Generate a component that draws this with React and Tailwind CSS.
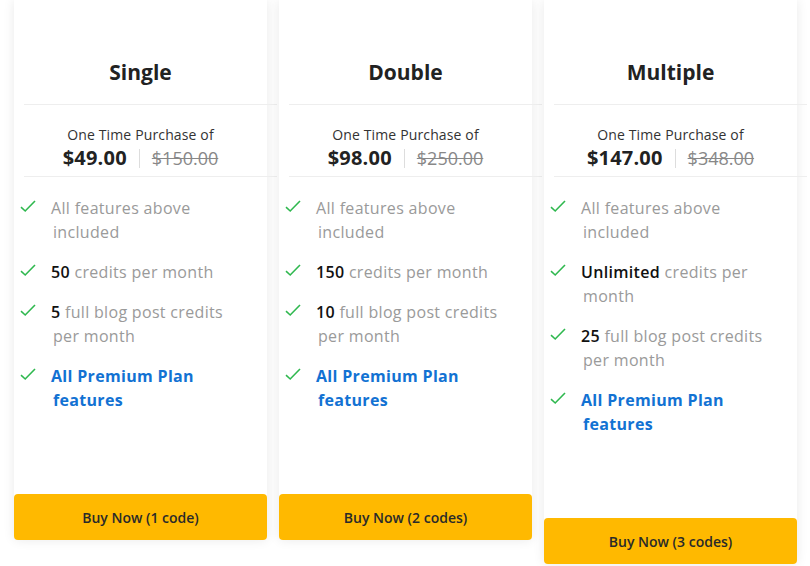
const PLANS = [
  {
    name: 'Single',
    price: '$49.00',
    was: '$150.00',
    credits: '50',
    blog: '5',
    button: 'Buy Now (1 code)',
  },
  {
    name: 'Double',
    price: '$98.00',
    was: '$250.00',
    credits: '150',
    blog: '10',
    button: 'Buy Now (2 codes)',
  },
  {
    name: 'Multiple',
    price: '$147.00',
    was: '$348.00',
    credits: 'Unlimited',
    blog: '25',
    button: 'Buy Now (3 codes)',
  },
];

const Check = () => (
  <svg width="16" height="13" viewBox="0 0 16 13" fill="none" className="shrink-0 mt-[4px]">
    <path d="M1 7.2 L5.2 11 L15 1" stroke="#2fb84f" strokeWidth="1.6" />
  </svg>
);

const Feature = ({ children }) => (
  <li className="flex items-start gap-[15px] pl-[6px]">
    <Check />
    <span className="w-[186px] pl-[2px] -indent-[2px] leading-[24px]">{children}</span>
  </li>
);

const PlanCard = ({ plan }) => (
  <div className="w-[253px] bg-white shadow-[0_0_12px_rgba(0,0,0,0.09)] rounded-b-[4px] flex flex-col">
    <h2 className="pt-[58px] pb-[18px] text-center text-[21px] leading-[28px] font-bold text-[#222]">
      {plan.name}
    </h2>
    <div className="ml-[10px] w-full h-px bg-[#eeeeee]" />
    <div className="pt-[21px] pb-[5px] text-center">
      <p className="text-[14px] leading-[18px] text-[#333] tracking-[0.01em]">One Time Purchase of</p>
      <div className="flex items-center justify-center gap-[12px] mt-[1px]">
        <span className="text-[20px] leading-[26px] font-bold text-[#222] tracking-[0.01em]">{plan.price}</span>
        <span className="w-px h-[19px] bg-[#dddddd]" />
        <span className="text-[18px] leading-[26px] text-[#888] line-through">{plan.was}</span>
      </div>
    </div>
    <div className="ml-[10px] w-full h-px bg-[#eeeeee]" />
    <ul className="pt-[19px] flex flex-col gap-[16px] text-[16px] tracking-[0.02em] text-[#9a9a9a]">
      <Feature>All features above included</Feature>
      <Feature>
        <b className="font-semibold text-[#111]">{plan.credits}</b> credits per month
      </Feature>
      <Feature>
        <b className="font-semibold text-[#111]">{plan.blog}</b> full blog post credits per month
      </Feature>
      <Feature>
        <span className="font-bold text-[#1272d3]">All Premium Plan features</span>
      </Feature>
    </ul>
    <button className="mt-[82px] h-[46px] w-full rounded-[4px] bg-[#ffb900] text-[14px] font-semibold text-[#2a2a2a]">
      {plan.button}
    </button>
  </div>
);

export default function App() {
  return (
    <div className="min-h-[566px] bg-white font-['Open_Sans',sans-serif] overflow-hidden">
      <div className="flex items-start gap-[12px] pl-[14px]">
        {PLANS.map(plan => (
          <PlanCard key={plan.name} plan={plan} />
        ))}
      </div>
    </div>
  );
}
